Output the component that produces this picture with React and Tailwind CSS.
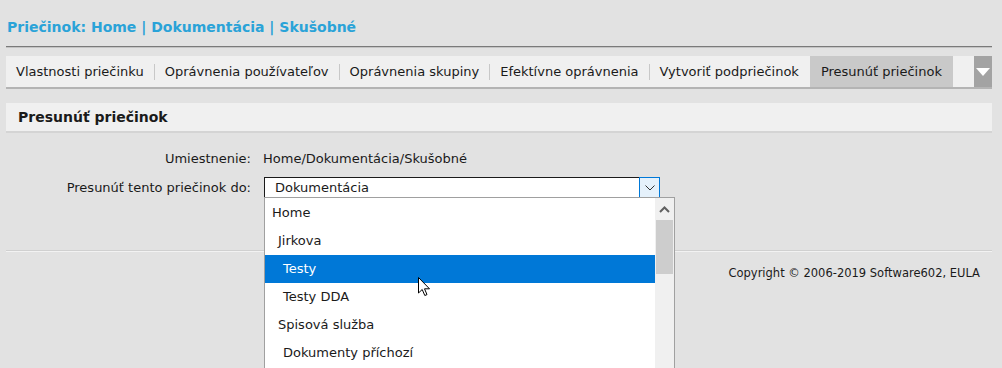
import React from "react";

const FONT = { fontFamily: '"DejaVu Sans", Verdana, sans-serif' };

const TABS = [
  "Vlastnosti priečinku",
  "Oprávnenia používateľov",
  "Oprávnenia skupiny",
  "Efektívne oprávnenia",
  "Vytvoriť podpriečinok",
];

const OPTIONS = [
  { label: "Home", indent: "pl-[7px]" },
  { label: "Jirkova", indent: "pl-[13px]" },
  { label: "Testy", indent: "pl-[18px]", active: true },
  { label: "Testy DDA", indent: "pl-[18px]" },
  { label: "Spisová služba", indent: "pl-[13px]" },
  { label: "Dokumenty příchozí", indent: "pl-[18px]" },
];

const App = () => {
  return (
    <div
      className="relative w-full h-[368px] overflow-hidden bg-[#e2e2e2] text-[#1a1a1a] pl-[6px] pr-[10px]"
      style={FONT}
    >
      {/* Title */}
      <div className="h-[46px] pt-[17px] pl-[1px] text-[14px] font-bold text-[#2aa3d8] leading-[20px]">
        Priečinok: Home | Dokumentácia | Skušobné
      </div>
      <div className="h-px bg-[#7a7a7a]" />
      <div className="h-px bg-[#c4c4c4]" />

      {/* Tabs */}
      <div className="mt-[8px] flex items-stretch h-[31px] bg-[#f0f0f0] border-b-2 border-[#b4b4b4] box-content text-[13px]">
        {TABS.map((t, i) => (
          <React.Fragment key={t}>
            {i > 0 && <span className="self-center w-px h-[16px] bg-[#c8c8c8]" />}
            <span className="flex items-center px-[10px] whitespace-nowrap">{t}</span>
          </React.Fragment>
        ))}
        <span className="flex items-center px-[11px] ml-[1px] bg-[#c9c9c9] whitespace-nowrap">
          Presunúť priečinok
        </span>
        <span className="ml-auto w-[18px] flex items-center justify-center bg-[#a3a3a3]">
          <svg width="14" height="8" viewBox="0 0 14 8">
            <path d="M0 0 L14 0 L7 8 Z" fill="#fff" />
          </svg>
        </span>
      </div>

      {/* Section header */}
      <div className="mt-[14px] h-[28px] bg-[#f0f0f0] border-b-2 border-[#d4d4d4] box-content flex items-center pl-[12px] text-[14px] font-bold">
        Presunúť priečinok
      </div>

      {/* Form */}
      <div className="pt-[16px] text-[13px]">
        <div className="flex items-center h-[20px]">
          <span className="w-[245px] text-right">Umiestnenie:</span>
          <span className="ml-[12px]">Home/Dokumentácia/Skušobné</span>
        </div>
        <div className="flex items-center h-[21px] mt-[8px]">
          <span className="w-[245px] text-right">Presunúť tento priečinok do:</span>
          <div className="ml-[13px] flex h-[21px] w-[396px] bg-white">
            <div className="flex-1 border border-[#1a1a1a] border-r-0 flex items-center pl-[10px]">
              Dokumentácia
            </div>
            <div className="w-[21px] border border-[#0078d7] bg-[#e5f1fb] flex items-center justify-center">
              <svg width="10" height="6" viewBox="0 0 10 6">
                <path d="M0.5 0.5 L5 5 L9.5 0.5" fill="none" stroke="#333" strokeWidth="1" />
              </svg>
            </div>
          </div>
        </div>
      </div>

      {/* Footer */}
      <div className="mt-[52px] h-px bg-[#d0d0d0]" />
      <div className="h-px bg-[#f2f2f2]" />
      <div className="mt-[13px] text-right pr-[12px] text-[11.5px]">
        Copyright © 2006-2019 Software602, EULA
      </div>

      {/* Open dropdown list */}
      <div className="absolute left-[264px] top-[197px] w-[411px] h-[180px] bg-white border border-[#a0a0a0] flex text-[13px]">
        <div className="flex-1 pt-[1px]">
          {OPTIONS.map((o) => (
            <div
              key={o.label}
              className={`h-[28px] flex items-center ${o.indent} ${
                o.active ? "bg-[#0078d7] text-white" : ""
              }`}
            >
              {o.label}
            </div>
          ))}
        </div>
        <div className="w-[19px] bg-[#f0f0f0] flex flex-col items-center">
          <div className="h-[22px] flex items-center justify-center">
            <svg width="11" height="7" viewBox="0 0 11 7">
              <path d="M1 6 L5.5 1.5 L10 6" fill="none" stroke="#606060" strokeWidth="2" />
            </svg>
          </div>
          <div className="w-[17px] h-[54px] bg-[#cdcdcd]" />
        </div>
      </div>

      {/* Mouse pointer */}
      <svg
        className="absolute left-[418px] top-[277px]"
        width="14"
        height="21"
        viewBox="0 0 14 21"
      >
        <path
          d="M0.5 0.5 L0.5 16 L4.2 12.5 L6.8 18.5 L9 17.6 L6.5 11.8 L11.5 11.8 Z"
          fill="#fff"
          stroke="#000"
          strokeWidth="1"
        />
      </svg>
    </div>
  );
};

export default App;
